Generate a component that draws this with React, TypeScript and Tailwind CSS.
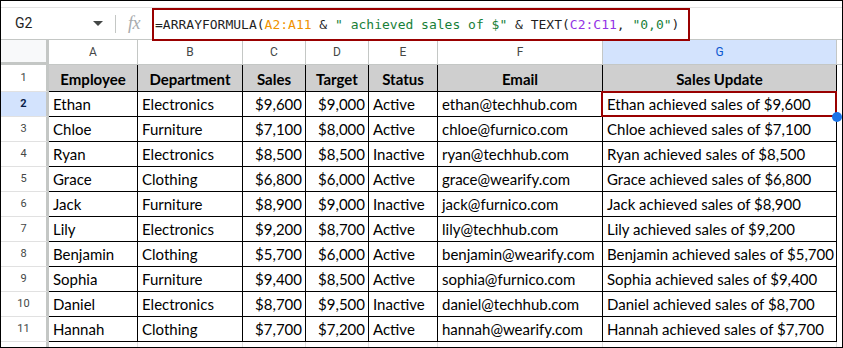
import React from "react";

const rows = [
  ["Ethan", "Electronics", "$9,600", "$9,000", "Active", "ethan@techhub.com"],
  ["Chloe", "Furniture", "$7,100", "$8,000", "Active", "chloe@furnico.com"],
  ["Ryan", "Electronics", "$8,500", "$8,500", "Inactive", "ryan@techhub.com"],
  ["Grace", "Clothing", "$6,800", "$6,000", "Active", "grace@wearify.com"],
  ["Jack", "Furniture", "$8,900", "$9,000", "Inactive", "jack@furnico.com"],
  ["Lily", "Electronics", "$9,200", "$8,700", "Active", "lily@techhub.com"],
  ["Benjamin", "Clothing", "$5,700", "$6,000", "Active", "benjamin@wearify.com"],
  ["Sophia", "Furniture", "$9,400", "$8,500", "Active", "sophia@furnico.com"],
  ["Daniel", "Electronics", "$8,700", "$9,500", "Inactive", "daniel@techhub.com"],
  ["Hannah", "Clothing", "$7,700", "$7,200", "Active", "hannah@wearify.com"],
];

const widths = ["w-[89px]", "w-[105px]", "w-[63px]", "w-[63px]", "w-[69px]", "w-[165px]", "w-[234px]"];
const letters = ["A", "B", "C", "D", "E", "F", "G"];
const headers = ["Employee", "Department", "Sales", "Target", "Status", "Email", "Sales Update"];

const cellFont = { fontFamily: "Lato, 'Open Sans', sans-serif" };
const uiFont = { fontFamily: "Roboto, 'Liberation Sans', sans-serif" };
const monoFont = { fontFamily: "'DejaVu Sans Mono', 'Liberation Mono', monospace" };

export default function App() {
  return (
    <div className="w-[843px] h-[348px] border border-black bg-white overflow-hidden flex flex-col">
      {/* top strip */}
      <div className="h-[7px] shrink-0 border-b border-[#e3e3e3]" />
      {/* formula bar */}
      <div className="h-[32px] shrink-0 flex items-start border-b border-[#c4c7c5]" style={uiFont}>
        <div className="w-[114px] h-[31px] flex items-center pl-[14px] pr-[12px] justify-between">
          <span className="text-[14px] text-[#1f1f1f]">G2</span>
          <svg width="10" height="6" viewBox="0 0 10 6">
            <path d="M0 0 L10 0 L5 5 Z" fill="#444746" />
          </svg>
        </div>
        <div className="w-px h-[18px] mt-[7px] bg-[#c4c7c5]" />
        <div className="w-[36px] h-[31px] flex items-center justify-center">
          <span className="text-[18px] italic text-[#a8abad] tracking-[-0.5px]" style={{ fontFamily: "'Liberation Serif', serif" }}>
            fx
          </span>
        </div>
        <div className="h-[33px] w-[538px] border-2 border-[#990000] bg-white flex items-center pl-[1px] text-[13px] text-[#1f1f1f] whitespace-pre relative z-10" style={monoFont}>
          <span>=ARRAYFORMULA(</span>
          <span className="text-[#f09300]">A2:A11</span>
          <span> & </span>
          <span className="text-[#188038]">" achieved sales of $"</span>
          <span> & TEXT(</span>
          <span className="text-[#9334e6]">C2:C11</span>
          <span>, </span>
          <span className="text-[#188038]">"0,0"</span>
          <span>)</span>
        </div>
      </div>
      {/* column headers */}
      <div className="h-[25px] shrink-0 flex" style={uiFont}>
        <div className="w-[48px] h-[25px] bg-[#f8f9fa] border-r-[3px] border-b-[3px] border-[#c4c7c5]" />
        {letters.map((l, i) => (
          <div
            key={l}
            className={`${widths[i]} h-[25px] flex items-center justify-center text-[12px] border-r border-b border-[#c4c7c5] ${
              l === "G" ? "bg-[#d3e3fd] text-[#0b57d0]" : "text-[#444746]"
            }`}
          >
            {l}
          </div>
        ))}
        <div className="flex-1 border-b border-[#c4c7c5]" />
      </div>
      {/* row 1 header */}
      <div className="h-[27px] shrink-0 flex">
        <div className="w-[48px] h-[27px] flex items-center justify-center text-[11px] text-[#444746] border-r-[3px] border-b border-r-[#c4c7c5] border-b-[#e1e1e1]" style={uiFont}>
          1
        </div>
        {headers.map((h, i) => (
          <div
            key={h}
            className={`${widths[i]} h-[27px] flex items-center justify-center pt-[3px] bg-[#cfcfcf] border-r border-b border-black text-[15px] font-bold text-black`}
            style={cellFont}
          >
            {h}
          </div>
        ))}
        <div className="flex-1" />
      </div>
      {/* data rows */}
      {rows.map((r, ri) => {
        const n = ri + 2;
        const sel = n === 2;
        return (
          <div key={n} className="h-[25px] shrink-0 flex">
            <div
              className={`w-[48px] h-[25px] flex items-center justify-center text-[11px] border-r-[3px] border-b border-r-[#c4c7c5] border-b-[#e1e1e1] ${
                sel ? "bg-[#d3e3fd] text-[#0b1f4a] font-bold" : "text-[#444746]"
              }`}
              style={uiFont}
            >
              {n}
            </div>
            {r.map((v, ci) => (
              <div
                key={ci}
                className={`${widths[ci]} h-[25px] flex items-center pt-[1px] border-r border-b border-black text-[15px] text-black whitespace-nowrap ${
                  ci === 2 || ci === 3 ? "justify-end pr-[3px]" : "pl-[4px]"
                }`}
                style={cellFont}
              >
                {v}
              </div>
            ))}
            <div
              className="w-[234px] h-[25px] flex items-center pt-[1px] pl-[4px] border-r border-b border-black text-[15px] text-black whitespace-nowrap relative"
              style={cellFont}
            >
              {r[0]} achieved sales of {r[2]}
              {sel && (
                <>
                  <div className="absolute left-[-2px] top-[-1px] right-[-1px] bottom-[-1px] border-2 border-[#990000]" />
                  <div className="absolute right-[-6px] bottom-[-6px] w-[10px] h-[10px] rounded-full bg-[#1a73e8] z-10" />
                </>
              )}
            </div>
            <div className="flex-1" />
          </div>
        );
      })}
      {/* partial row */}
      <div className="flex-1 flex">
        <div className="w-[48px] border-r-[3px] border-[#c4c7c5]" />
        {widths.map((w, i) => (
          <div key={i} className={`${w} border-r border-[#e1e1e1]`} />
        ))}
      </div>
    </div>
  );
}
